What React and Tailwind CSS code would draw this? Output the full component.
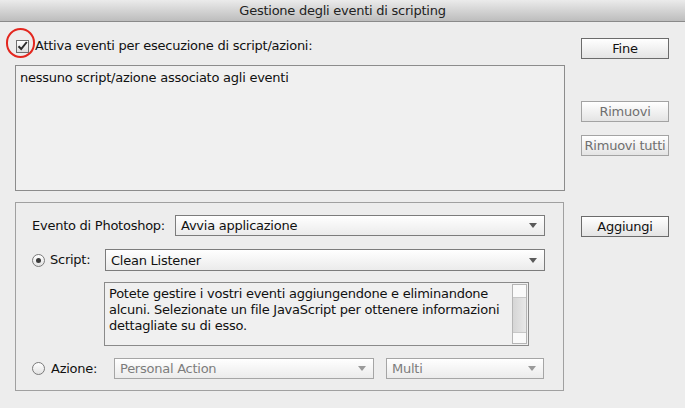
import React from "react";

const font = { fontFamily: '"Lucida Grande", "DejaVu Sans", sans-serif' };

const Button = ({ children, disabled, className = "" }) => (
  <div
    className={`h-[21px] w-[88px] flex items-center justify-center text-[13px] border bg-gradient-to-b from-[#ffffff] to-[#e4e4e4] ${
      disabled ? "border-[#a3a3a3] text-[#6f6f6f]" : "border-[#6b6b6b] text-[#111]"
    } ${className}`}
  >
    {children}
  </div>
);

const Dropdown = ({ value, disabled, className = "" }) => (
  <div
    className={`flex items-center justify-between pl-[5px] pr-[7px] text-[13px] border bg-gradient-to-b from-[#ffffff] to-[#ebebeb] ${
      disabled ? "border-[#a5a5a5] text-[#7d7d7d]" : "border-[#7c7c7c] text-[#111]"
    } ${className}`}
  >
    <span className="leading-none">{value}</span>
    <svg width="8" height="5" viewBox="0 0 8 5">
      <path d="M0 0h8L4 5z" fill={disabled ? "#9a9a9a" : "#5a5a5a"} />
    </svg>
  </div>
);

const Radio = ({ checked }) => (
  <div className="w-[13px] h-[13px] rounded-full border border-[#7a7a7a] bg-gradient-to-b from-[#ffffff] to-[#e2e2e2] flex items-center justify-center">
    {checked && <div className="w-[5px] h-[5px] rounded-full bg-[#3a3a3a]" />}
  </div>
);

export default function App() {
  return (
    <div style={font} className="w-[685px] h-[408px] bg-[#ededed] flex flex-col text-[#111] tracking-[-0.25px]">
      {/* Title bar */}
      <div className="h-[22px] shrink-0 flex items-center justify-center border-b border-[#8a8a8a] bg-gradient-to-b from-[#ebebeb] to-[#bdbdbd] text-[13px] text-[#222]">
        Gestione degli eventi di scripting
      </div>

      <div className="flex pl-[15px]">
        {/* Left column */}
        <div className="w-[550px] flex flex-col">
          <div className="relative flex items-center h-[14px] mt-[17px] pl-[1px]">
            <div className="w-[13px] h-[13px] border border-[#6f6f6f] bg-gradient-to-b from-[#ffffff] to-[#dedede] flex items-center justify-center">
              <svg width="11" height="10" viewBox="0 0 11 10">
                <path d="M1.5 5.2 4.2 8 9.8 1" fill="none" stroke="#2c2c2c" strokeWidth="2" />
              </svg>
            </div>
            <span className="ml-[6px] text-[13px]">Attiva eventi per esecuzione di script/azioni:</span>
            <div className="absolute left-[-9px] top-[-11px] w-[29px] h-[30px] rounded-full border-2 border-[#e3271f]" />
          </div>

          <div className="mt-[12px] h-[126px] border border-[#8c8c8c] bg-[#f0f0f0] px-[4px] pt-[2px] text-[13px]">
            nessuno script/azione associato agli eventi
          </div>

          {/* Group box */}
          <div className="mt-[11px] w-[549px] h-[189px] border border-[#a0a0a0] pl-[16px] pt-[12px] flex flex-col">
            <div className="flex items-center">
              <span className="w-[143px] text-[13px]">Evento di Photoshop:</span>
              <Dropdown value="Avvia applicazione" className="w-[370px] h-[21px]" />
            </div>

            <div className="flex items-center mt-[13px]">
              <Radio checked />
              <span className="ml-[5px] w-[55px] text-[13px]">Script:</span>
              <Dropdown value="Clean Listener" className="w-[440px] h-[22px]" />
            </div>

            <div className="ml-[72px] mt-[11px] w-[425px] h-[64px] border border-[#8a8a8a] bg-[#f0f0f0] flex">
              <div className="flex-1 pl-[4px] pt-[3px] text-[13px] leading-[16px]">
                Potete gestire i vostri eventi aggiungendone e eliminandone alcuni. Selezionate un file JavaScript per ottenere informazioni dettagliate su di esso.
              </div>
              <div className="w-[15px] mr-[1px] my-[1px] border border-[#b5b5b5] flex flex-col">
                <div className="h-[13px] bg-[#fafafa] border-b border-[#c8c8c8]" />
                <div className="flex-1 bg-gradient-to-r from-[#d6d6d6] to-[#e8e8e8]" />
                <div className="h-[11px] bg-[#fafafa] border-t border-[#c8c8c8]" />
              </div>
            </div>

            <div className="flex items-center mt-[12px]">
              <Radio />
              <span className="ml-[6px] w-[63px] text-[13px]">Azione:</span>
              <Dropdown value="Personal Action" disabled className="w-[260px] h-[21px]" />
              <Dropdown value="Multi" disabled className="ml-[12px] w-[158px] h-[21px]" />
            </div>
          </div>
        </div>

        {/* Right column */}
        <div className="ml-[16px] flex flex-col">
          <Button className="mt-[16px]">Fine</Button>
          <Button disabled className="mt-[42px]">Rimuovi</Button>
          <Button disabled className="mt-[13px]">Rimuovi tutti</Button>
          <Button className="mt-[60px]">Aggiungi</Button>
        </div>
      </div>
    </div>
  );
}
